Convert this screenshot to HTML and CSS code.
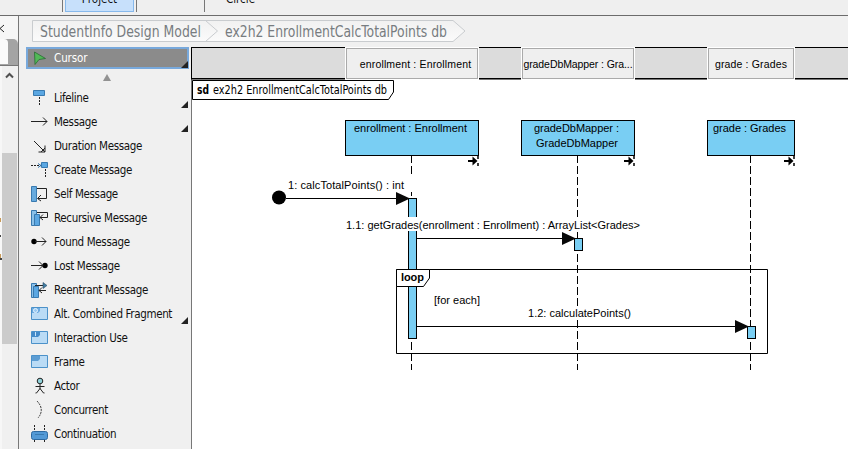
FILE: index.html
```
<!DOCTYPE html>
<html lang="en">
<head>
<meta charset="utf-8">
<title>Sequence diagram editor</title>
<link rel="stylesheet" href="styles.css">
</head>
<body>
<div class="app">
  <header class="toolbar">
    <div class="tool selected"><span>Project</span></div>
    <div class="tool wide"><span>Circle</span></div>
  </header>
  <div class="main">
    <aside class="strip">
      <div class="collapse"><svg width="18" height="24"><path d="M4 9 L0 12.5 L4 16" fill="none" stroke="#222"/></svg></div>
      <div class="tab"><i></i></div>
      <div class="scroll">
        <svg class="up" width="18" height="18"><path d="M6 11.5 L9.5 8 L13 11.5" fill="none" stroke="#505050" stroke-width="2"/></svg>
        <div class="thumb"></div>
        <svg class="bits" width="2" height="45"><path d="M0 1h1v4H0zM0 37h1v5H0z" fill="#c89a58"/><path d="M0 18h1v2H0zM0 41h2v2H0z" fill="#444"/></svg>
      </div>
    </aside>
    <div class="work">
      <nav class="crumbs">
        <svg width="448" height="32" viewBox="19 16 448 32">
          <defs><linearGradient id="crumb" x2="0" y2="1"><stop stop-color="#f1f1f1"/><stop offset="1" stop-color="#fbfbfb"/></linearGradient></defs>
          <path d="M32.500 20.500H453L465 31L453 41.500H32.500Z" fill="url(#crumb)" stroke="#c9cccf"/>
          <path d="M205.500 20.500L217.500 31L205.500 41.500" fill="none" stroke="#c9cccf"/>
          <text x="40" y="37" textLength="161" lengthAdjust="spacingAndGlyphs">StudentInfo Design Model</text>
          <text x="225" y="37" textLength="222" lengthAdjust="spacingAndGlyphs">ex2h2 EnrollmentCalcTotalPoints db</text>
        </svg>
      </nav>
      <div class="editor">
        <ul class="palette">
          <li class="item cursor more"><svg viewBox="0 0 18 18"><path d="M4.500 3L15.500 9.500L9 10.500L5 15.500Z" fill="#52b957" stroke="#2a6b34" stroke-width=".8"/></svg><span>Cursor</span></li>
          <li class="scroller"><svg width="10" height="8"><path d="M5 0L9 7H1Z" fill="#929292"/></svg></li>
          <li class="item more"><svg viewBox="0 0 18 18"><path d="M3.500 1.500h11v5h-11z" fill="#5ba7e2" stroke="#397ab0"/><path d="M9.500 8v9" stroke="#222" stroke-dasharray="2 1"/></svg><span>Lifeline</span></li>
          <li class="item more"><svg viewBox="0 0 18 18"><path d="M1 8.500H17M13 4.500L17 8.500L13 12.500" fill="none" stroke="#222"/></svg><span>Message</span></li>
          <li class="item"><svg viewBox="0 0 18 18"><path d="M4 4L15 15M15 8.500V15H8.500M11 15L15 11" fill="none" stroke="#222"/></svg><span>Duration Message</span></li>
          <li class="item"><svg viewBox="0 0 18 18"><path d="M11.500 1.500h6v5h-6z" fill="#5ba7e2" stroke="#397ab0"/><path d="M1 4.500h10M15.500 8v9" stroke="#222" stroke-dasharray="2 1"/><path d="M8 2.500L11 4.500L8 6.500" fill="none" stroke="#397ab0"/></svg><span>Create Message</span></li>
          <li class="item"><svg viewBox="0 0 18 18"><path d="M1.500 1.500h5v15h-5z" fill="#66aade" stroke="#397ab0"/><path d="M7 3.500H16.500V13.500H8M11 10L7.500 13.500L11 16" fill="none" stroke="#222"/></svg><span>Self Message</span></li>
          <li class="item"><svg viewBox="0 0 18 18"><path d="M1.500 1.500h5v15h-5z" fill="#8bc1e9" stroke="#397ab0"/><path d="M4.500 5.500h5v11h-5z" fill="#5ba7e2" stroke="#397ab0"/><path d="M7 3.500H17.500V8.500H10M13 5.500L10 8.500L13 11" fill="none" stroke="#222"/></svg><span>Recursive Message</span></li>
          <li class="item"><svg viewBox="0 0 18 18"><circle cx="4" cy="8.500" r="2.700" fill="#000"/><path d="M5 8.500H16M12 4.500L16 8.500L12 12.500" fill="none" stroke="#222"/></svg><span>Found Message</span></li>
          <li class="item"><svg viewBox="0 0 18 18"><circle cx="15" cy="8.500" r="2.700" fill="#000"/><path d="M1 8.500H13M9 4.500L13 8.500L9 12.500" fill="none" stroke="#222"/></svg><span>Lost Message</span></li>
          <li class="item"><svg viewBox="0 0 18 18"><path d="M1.500 2.500h5v14h-5z" fill="#8bc1e9" stroke="#397ab0"/><path d="M3.500 5.500h5v11h-5z" fill="#5ba7e2" stroke="#397ab0"/><path d="M5 4.500H15M9 9.500H16M12 6.500L9 9.500L12 12" fill="none" stroke="#222"/><path d="M13 1.500L17 4.500L13 7.500Z" fill="#427ca3" stroke="#284e66" stroke-width=".6"/></svg><span>Reentrant Message</span></li>
          <li class="item more"><svg viewBox="0 0 18 18"><path d="M1.500 2.500h16v12h-16z" fill="#badbf5" stroke="#4b91c9"/><path d="M2 3h8v3L8 8H2z" fill="#6caae0"/><circle cx="5.500" cy="5.500" r="2" fill="#9bcaf1" stroke="#e5f4ff"/></svg><span>Alt. Combined Fragment</span></li>
          <li class="item"><svg viewBox="0 0 18 18"><path d="M1.500 2.500h16v12h-16z" fill="#badbf5" stroke="#4b91c9"/><path d="M2 3h8v3L8 8H2z" fill="#438ac9"/><path d="M5.500 3v4" stroke="#c6e4fb"/></svg><span>Interaction Use</span></li>
          <li class="item"><svg viewBox="0 0 18 18"><path d="M1.500 2.500h16v12h-16z" fill="#badbf5" stroke="#4b91c9"/><path d="M2 3h8v3L8 8H2z" fill="#5d9dd3"/></svg><span>Frame</span></li>
          <li class="item"><svg viewBox="0 0 18 18"><circle cx="10" cy="4" r="2.800" fill="#8fd1d9" stroke="#222"/><path d="M10 7V12M5.500 9.500H14.500M10 11.500L6.500 16H5.500M10 11.500L13.500 16H14.500" fill="none" stroke="#222"/></svg><span>Actor</span></li>
          <li class="item"><svg viewBox="0 0 18 18"><path d="M7 0Q15 8.500 8 17" fill="none" stroke="#333" stroke-dasharray="2 1"/></svg><span>Concurrent</span></li>
          <li class="item"><svg viewBox="0 0 18 18"><path d="M4.500 0V7M14.500 0V7M4.500 15V18M14.500 15V18" stroke="#222" stroke-dasharray="2 1"/><rect x="1.500" y="6.500" width="16" height="8" rx="2" fill="#5299d6" stroke="#2d69a0"/><path d="M5 9.500h9" stroke="#397ab0"/></svg><span>Continuation</span></li>
        </ul>
        <section class="canvas">
          <div class="heads">
            <div class="head first">enrollment : Enrollment</div>
            <div class="head second">gradeDbMapper : Gra...</div>
            <div class="head third">grade : Grades</div>
          </div>
          <svg class="diagram" width="657" height="369" viewBox="191 80 657 369">
            <defs>
              <path id="head" d="M0 -6.500L14 0L0 6.500Z" fill="#080808"/>
              <g id="link"><path d="M0 6H6" stroke="#000" stroke-width="2"/><path d="M4.500 1.500L9.500 6L4.500 10.500Z"/><path d="M10 1V4M10 8V11" stroke="#000" stroke-width="1.500"/></g>
            </defs>
            <path class="edge" d="M191.500 80V449"/>
            <path class="line" d="M192.500 80.500H393.500V92L388.500 99.500H192.500Z"/>
            <g class="ui"><text x="197" y="94" font-weight="bold" textLength="12" lengthAdjust="spacingAndGlyphs">sd</text><text x="213" y="94" textLength="174" lengthAdjust="spacingAndGlyphs">ex2h2 EnrollmentCalcTotalPoints db</text></g>
            <g class="life"><path d="M411.500 155V370"/><path d="M577.500 155V370"/><path d="M750.500 155V370"/></g>
            <g class="box">
              <rect x="345.500" y="120.500" width="133" height="35"/>
              <rect x="521.500" y="120.500" width="113" height="35"/>
              <rect x="707.500" y="120.500" width="87" height="35"/>
              <rect x="408.500" y="198.500" width="8" height="140"/>
              <rect x="574.500" y="238.500" width="8" height="12"/>
              <rect x="747.500" y="326.500" width="8" height="12"/>
            </g>
            <use href="#link" x="468" y="155"/><use href="#link" x="624" y="155"/><use href="#link" x="784" y="155"/>
            <g fill="#fff"><rect x="287" y="179" width="118" height="12"/><rect x="345" y="217" width="296" height="14"/><rect x="527" y="307" width="105" height="13"/><rect x="409" y="175" width="6" height="17"/></g>
            <path class="line open" d="M396.500 269.500H767.500V353.500H396.500Z"/>
            <path class="line" d="M396.500 269.500H429.500V278L423.500 286.500H396.500Z"/>
            <circle cx="279" cy="197.500" r="7"/>
            <path class="line open" d="M286 198.500H397M417 238.500H563M417 326.500H736"/>
            <use href="#head" x="396" y="198.500"/><use href="#head" x="562" y="238.500"/><use href="#head" x="735" y="326.500"/>
            <g class="label">
              <text x="354" y="132" textLength="113">enrollment : Enrollment</text>
              <text x="534" y="132" textLength="85">gradeDbMapper :</text>
              <text x="536" y="147" textLength="82">GradeDbMapper</text>
              <text x="713" y="132" textLength="73">grade : Grades</text>
              <text x="288" y="189" textLength="116">1: calcTotalPoints() : int</text>
              <text x="346" y="229" textLength="294">1.1: getGrades(enrollment : Enrollment) : ArrayList&lt;Grades&gt;</text>
              <text x="401" y="281" font-weight="bold" textLength="23">loop</text>
              <text x="434" y="304" textLength="46">[for each]</text>
              <text x="528" y="317" textLength="103">1.2: calculatePoints()</text>
            </g>
          </svg>
        </section>
      </div>
    </div>
  </div>
</div>
</body>
</html>
```
FILE: styles.css
```
* { box-sizing: border-box; }
body { margin: 0; background: #f0f0f0; font: 11.5px "DejaVu Sans Condensed", "DejaVu Sans", sans-serif; font-stretch: condensed; color: #111; }
svg { display: block; }
.app { width: 848px; height: 449px; overflow: hidden; display: flex; flex-direction: column; }
.toolbar { height: 16px; flex: none; border-bottom: 1px solid #6c6c6c; display: flex; padding-left: 62px; background: #efefef; }
.tool { height: 12px; overflow: hidden; display: flex; line-height: 14px; }
.tool span { margin-top: -8px; }
.selected { width: 75px; border-left: 1px solid #777; border-right: 1px solid #777; padding: 0 2px; }
.selected span { flex: 1; text-align: center; height: 20px; background: #c7e0fb; border: 1px solid #87b9ec; border-top: 0; }
.wide { padding-left: 67px; }
.wide::before { content: ""; border-left: 1px solid #777; margin-right: 21px; }
.main { flex: 1; display: flex; min-height: 0; }
.strip { width: 19px; flex: none; border-right: 1px solid #777; display: flex; flex-direction: column; }
.collapse { height: 23px; background: #f6f6f6; }
.tab { height: 27px; background: #a4a4a4; border-bottom: 1px solid #777; border-radius: 0 5px 0 0; }
.tab i { display: block; width: 8px; height: 25px; background: #fafafa; border-radius: 0 4px 0 0; }
.scroll { flex: 1; border-left: 2px solid #f7f7f7; position: relative; }
.up { margin-left: -2px; }
.thumb { width: 15px; height: 191px; margin-top: 69px; background: #cbcbcb; }
.bits { position: absolute; left: -2px; top: 151px; }
.work { flex: 1; display: flex; flex-direction: column; min-width: 0; }
.crumbs { height: 31px; flex: none; }
.crumbs text { font-size: 15px; fill: #777c80; }
.editor { flex: 1; display: flex; min-height: 0; }
.palette { width: 172px; flex: none; list-style: none; margin: 0; padding: 0 2px 0 7px; overflow: hidden; }
.item { height: 24px; display: flex; align-items: center; position: relative; padding-left: 4px; line-height: 24px; letter-spacing: -.35px; white-space: nowrap; }
.item svg { width: 18px; height: 18px; margin-right: 6px; }
.item.more::after { content: ""; position: absolute; right: 1px; bottom: 2px; width: 0; height: 0; border: solid transparent; border-width: 0 0 7px 7px; border-bottom-color: #222; }
.cursor { height: 22px; background: #8b8b8b; color: #fff; border: 2px solid #78a9dc; letter-spacing: -.1px; }
.cursor svg { margin-left: -2px; }
.item.cursor::after { right: -1px; bottom: -1px; }
.scroller { height: 17px; padding: 5px 0 0 76px; }
.canvas { flex: 1; min-width: 0; background: #fff; }
.heads { height: 33px; display: flex; background: #dcdcdc; border: solid #000; border-width: 1px 0 1px 1px; border-bottom-color: #777; box-shadow: inset 0 -1px #000; }
.head { height: 31px; border: 1px solid #aaa; background: #efefef; outline: 1px solid #fff; font: 10.5px/29px "Liberation Sans", sans-serif; text-align: center; white-space: nowrap; letter-spacing: .15px; color: #000; padding-top: 1px; }
.first { width: 132px; margin-left: 154px; padding-left: 7px; }
.second { width: 112px; margin-left: 44px; letter-spacing: -.08px; }
.third { width: 86px; margin-left: 74px; }
.edge { stroke: #777; }
.line { fill: #fff; stroke: #000; }
.open { fill: none; }
.life { stroke: #000; stroke-dasharray: 8 3; }
.box { fill: #79cef3; stroke: #000; }
.ui text { font-size: 11.5px; }
.label { font: 11px "Liberation Sans", sans-serif; }
```
